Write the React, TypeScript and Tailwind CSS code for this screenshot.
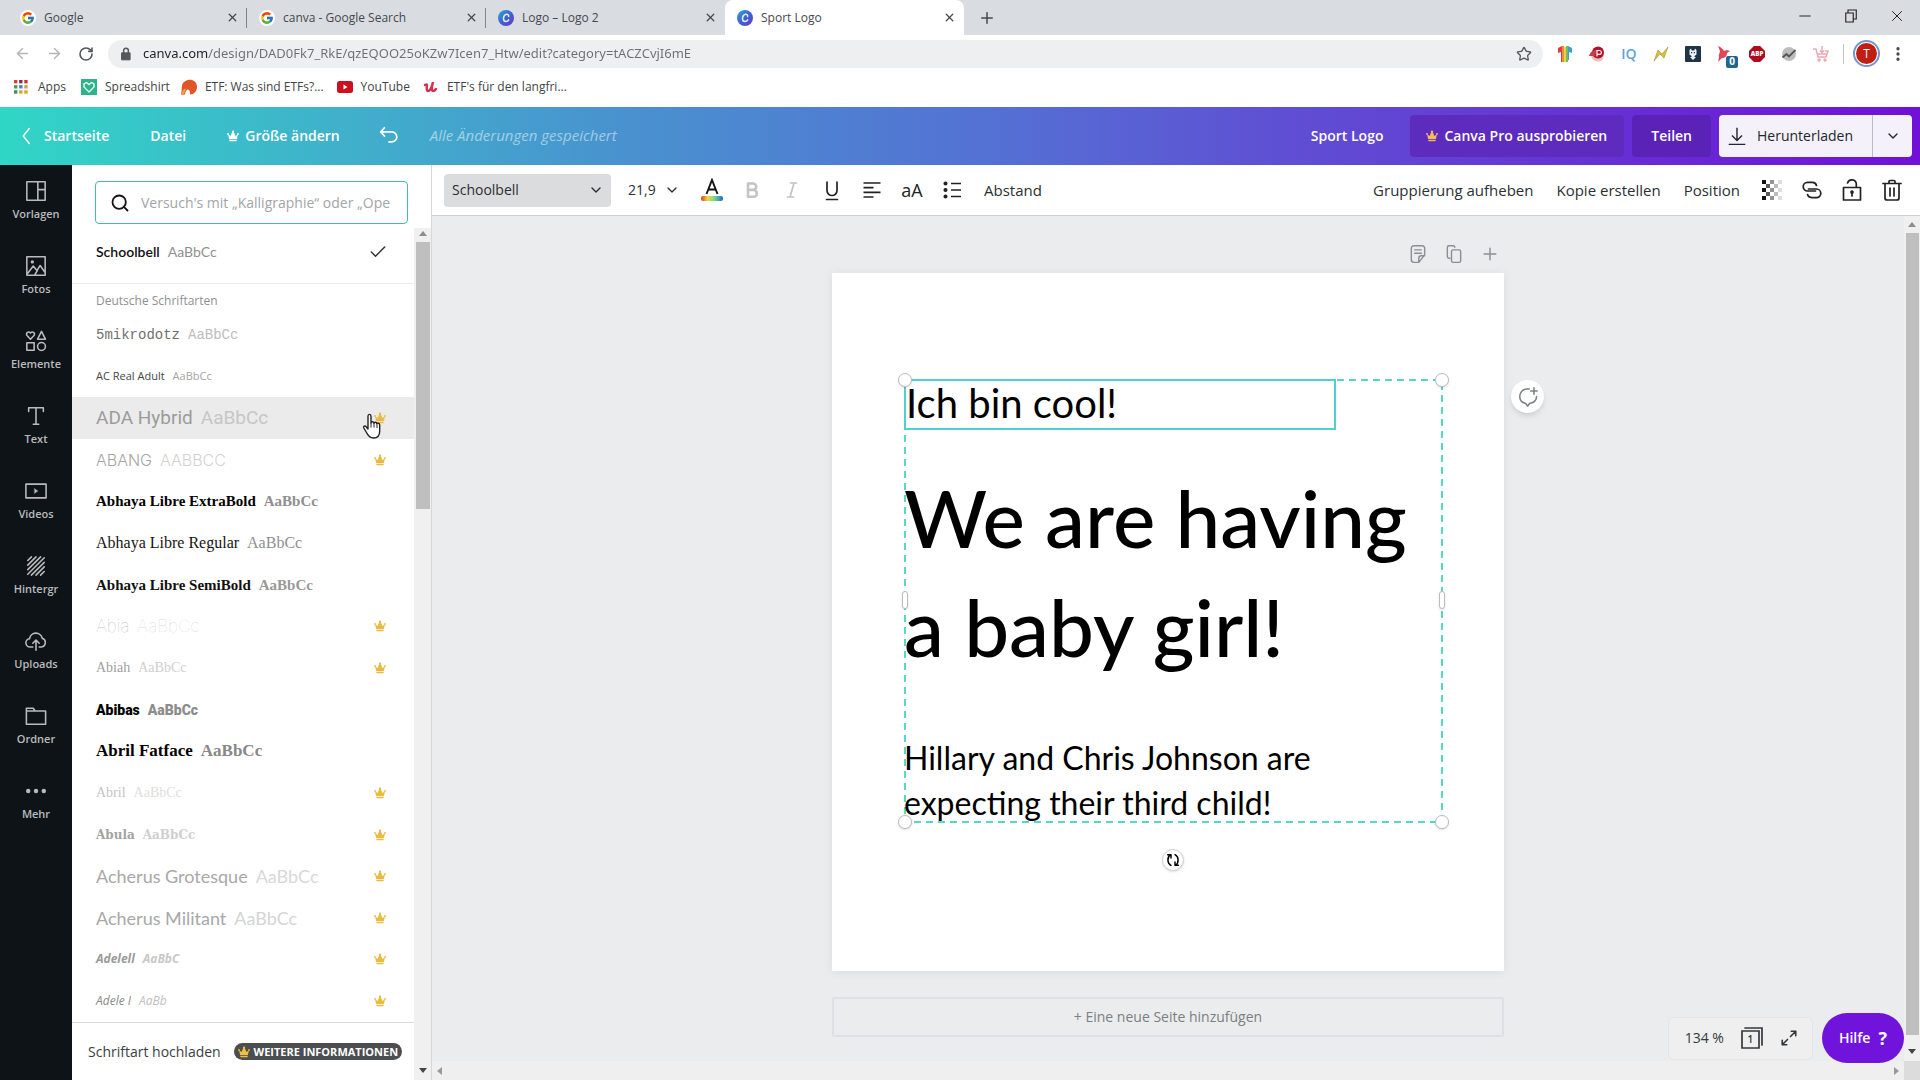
import React from "react";
import {
  Plus,
  Minus,
  X,
  ArrowLeft,
  ArrowRight,
  RotateCw,
  Lock,
  Star,
  EllipsisVertical,
  ChevronLeft,
  ChevronDown,
  Search,
  Check,
} from "lucide-react";
import { FcGoogle } from "react-icons/fc";

const SVG = ({ children, className = "size-6" }: { children: React.ReactNode; className?: string }) => (
  <svg
    viewBox="0 0 24 24"
    fill="none"
    stroke="currentColor"
    strokeWidth={1.7}
    strokeLinecap="round"
    strokeLinejoin="round"
    className={className + " shrink-0"}
    aria-hidden="true"
  >
    {children}
  </svg>
);

const Crown = ({ className }: { className: string }) => (
  <svg viewBox="0 0 12 12" fill="currentColor" className={className + " shrink-0"} aria-hidden="true">
    <path d="M2.2 9.300 1 4.300l2.600 1.700L5.200 2h1.600l1.600 4L11 4.300 9.800 9.300z" />
    <circle cx="1" cy="4" r=".9" />
    <circle cx="6" cy="1.600" r="1.100" />
    <circle cx="11" cy="4" r=".9" />
    <rect x="2.300" y="9.900" width="7.400" height="1.300" rx=".4" />
  </svg>
);

const CanvaMark = () => (
  <svg viewBox="0 0 16 16" className="size-4 shrink-0" aria-hidden="true">
    <defs>
      <linearGradient id="canvaMark" x1="0" y1="0" x2="1" y2="1">
        <stop offset="0" stopColor="#2fa8cf" />
        <stop offset=".5" stopColor="#3f63cf" />
        <stop offset="1" stopColor="#6a35d0" />
      </linearGradient>
    </defs>
    <circle cx="8" cy="8" r="8" fill="url(#canvaMark)" />
    <path
      d="M10.600 6.400C10.800 5 9.900 4.200 8.800 4.200 6.900 4.200 5.500 6.200 5.500 8.500c0 1.900 1 3.100 2.500 3.100 1.200 0 2.200-.7 2.700-1.700"
      fill="none"
      stroke="#dff3ff"
      strokeWidth="1.500"
      strokeLinecap="round"
    />
  </svg>
);

const TABS = [
  { title: "Google", kind: "g", active: false },
  { title: "canva - Google Search", kind: "g", active: false },
  { title: "Logo – Logo 2", kind: "c", active: false },
  { title: "Sport Logo", kind: "c", active: true },
];

function TabStrip() {
  return (
    <div className="flex h-[35px] items-stretch bg-[#d9dce1] pl-2 text-xs text-[#45494d]">
      {TABS.map((t, i) => (
        <div
          key={t.title}
          className={
            t.active
              ? "flex w-[239px] items-center gap-2 rounded-t-lg bg-white pr-2 pl-3"
              : "relative flex w-[239px] items-center gap-2 pr-2 pl-3"
          }
        >
          {t.kind === "g" ? (
            <span className="flex size-4 items-center justify-center rounded-full bg-white">
              <FcGoogle className="size-[14px]" />
            </span>
          ) : (
            <CanvaMark />
          )}
          <span className="flex-1 truncate">{t.title}</span>
          <button aria-label="Tab schließen">
            <X className="size-[13px]" strokeWidth={2.4} />
          </button>
          {i < 2 && <span className="absolute right-0 h-5 w-px bg-[#82868b]" />}
        </div>
      ))}
      <button aria-label="Neuer Tab" className="ml-[14px]">
        <Plus className="size-[18px]" strokeWidth={2} />
      </button>
      <div className="ml-auto flex items-center gap-7 pr-[14px] pb-1 text-[#222]">
        <button aria-label="Minimieren">
          <Minus className="size-[18px]" strokeWidth={1.3} />
        </button>
        <button aria-label="Wiederherstellen">
          <SVG className="size-[18px]">
            <path d="M5 8h10v12H5zM8 8V4h11v12h-4" strokeWidth="1.500" strokeLinejoin="miter" />
          </SVG>
        </button>
        <button aria-label="Schließen">
          <X className="size-[18px]" strokeWidth={1.3} />
        </button>
      </div>
    </div>
  );
}

function Extensions() {
  return (
    <div className="flex flex-1 items-center pl-[14px]">
      <div className="flex items-center gap-4">
        <svg viewBox="0 0 16 16" className="size-4">
          <path d="M1 2 5 0v16H4V6L1 7z" fill="#d8403a" />
          <path d="M5 0h2v16H5z" fill="#e8913a" />
          <path d="M7 1h2v15H7z" fill="#efd04a" />
          <path d="M9 0h2v16H9z" fill="#6dbf6a" />
          <path d="m11 0 4 2v5l-3-1v8h-1z" fill="#3fa0c8" />
        </svg>
        <svg viewBox="0 0 16 16" className="size-4">
          <path d="M2 9c0 6 9 9 12 4l1-5z" fill="#e5c4b8" />
          <circle cx="9" cy="6.500" r="6" fill="#b3122d" />
          <path d="M0 10c1-4 4-6 8-6l-2 6z" fill="#c93a4c" />
          <path d="M8 10.500V4.500h2.500a1.900 1.900 0 0 1 0 3.800H8" fill="none" stroke="#fff" strokeWidth="1.200" />
        </svg>
        <span className="flex w-4 justify-center text-sm font-semibold text-[#5aa5d6]">IQ</span>
        <svg viewBox="0 0 16 16" className="size-4">
          <path d="M15 1 11 12 7 8 1 15 5 4l4 4z" fill="#d9c22e" stroke="#8a8430" strokeWidth=".5" />
        </svg>
        <svg viewBox="0 0 16 16" className="size-4">
          <rect width="16" height="16" rx="1" fill="#1f3447" />
          <path d="M4.500 8.500V4L6 2.500l.7 2h2.600l.7-2L11.500 4v4.500L9.500 10v1H11l-3 3-3-3h1.500v-1z" fill="#eef4f8" />
          <path d="M6 6h1.200v1.200H6zM8.800 6H10v1.200H8.800z" fill="#1f3447" />
        </svg>
        <span className="relative">
          <svg viewBox="0 0 16 16" className="size-4">
            <path d="M1 0c3 1 5 3 6 5l3-1 3 1-3 2c0 3-2 5-5 5l-4 4 1-5C1 9 3 7 3 5z" fill="#e0475a" />
          </svg>
          <span className="absolute top-[10px] left-[9px] flex h-3 w-3 items-center justify-center rounded-xs bg-[#22658f] text-[10px] font-bold text-white">
            0
          </span>
        </span>
        <svg viewBox="0 0 18 18" className="size-4">
          <path d="M5.500 0h7L18 5.500v7L12.500 18h-7L0 12.500v-7z" fill="#b00b1c" />
          <text x="9" y="11.600" textAnchor="middle" fontSize="7" fontWeight="800" fill="#fff">
            ABP
          </text>
        </svg>
        <svg viewBox="0 0 16 16" className="size-4">
          <circle cx="8" cy="8" r="7" fill="#bdbdbd" />
          <path d="m1.500 11.500 4-3.500 2.500 2.500 6.500-6.500" fill="none" stroke="#555" strokeWidth="1.800" />
        </svg>
        <svg viewBox="0 0 16 16" className="size-4" fill="none" stroke="#eba6b3" strokeWidth="1.400">
          <path d="M0 3h3l2 8h8l2-6h-3M4.500 8h9M9 0v6M7 4.500 9 6.500l2-2" />
          <circle cx="6" cy="14" r="1" />
          <circle cx="12" cy="14" r="1" />
        </svg>
      </div>
      <div className="ml-[14px] flex items-center gap-[9px]">
        <span className="h-5 w-px bg-[#c4c6c9]" />
        <button aria-label="Profil" className="size-[27px] rounded-full border-2 border-[#7695cf] bg-white p-px">
          <span className="flex size-full items-center justify-center rounded-full bg-[#c11f14] text-xs text-white">T</span>
        </button>
        <button aria-label="Menü">
          <EllipsisVertical className="size-[18px] text-[#45494d]" strokeWidth={2.4} />
        </button>
      </div>
    </div>
  );
}

function BrowserBar() {
  return (
    <>
      <div className="flex h-[37px] items-center bg-white text-[#54585c]">
        <div className="flex w-[108px] items-center gap-[15px] pl-[14px]">
          <button aria-label="Zurück">
            <ArrowLeft className="size-[17px] text-[#b2b5b8]" />
          </button>
          <button aria-label="Vor">
            <ArrowRight className="size-[17px] text-[#b2b5b8]" />
          </button>
          <button aria-label="Neu laden">
            <RotateCw className="size-4" strokeWidth={2.4} />
          </button>
        </div>
        <div className="flex h-7 w-[1435px] items-center gap-[10px] rounded-full bg-[#eeeff1] px-[11px]">
          <SVG className="size-[14px]">
            <path d="M5 10h14v12H5z" fill="currentColor" />
            <path d="M8 10V6a4 4 0 0 1 8 0v4" strokeWidth="2.600" />
          </SVG>
          <input
            aria-label="Adresse"
            defaultValue="canva.com/design/DAD0Fk7_RkE/qzEQOO25oKZw7Icen7_Htw/edit?category=tACZCvjI6mE"
            className="flex-1 bg-linear-[90deg,#202124_65px,#6b6f73_66px] bg-clip-text font-['Noto_Sans',sans-serif] text-[13px] text-transparent outline-none"
          />
          <Star className="size-4" />
        </div>
        <Extensions />
      </div>
      <nav className="flex h-[35px] items-center bg-white pb-[5px] pl-[14px] text-xs text-[#3f4347]">
        <a href="#apps" className="flex items-center gap-[10px]">
          <svg viewBox="0 0 15 15" className="size-[14px]">
            {["#d0443a", "#8a3040", "#c8343a", "#4c9a5c", "#4a7fc0", "#c9a53a", "#3e8f56", "#c9a53a", "#d8a52e"].map((c, i) => (
              <rect key={i} x={(i % 3) * 5.5} y={Math.floor(i / 3) * 5.5} width="3.600" height="3.600" fill={c} />
            ))}
          </svg>
          Apps
        </a>
        <a href="#spreadshirt" className="ml-[15px] flex items-center gap-2">
          <svg viewBox="0 0 16 16" className="size-4">
            <rect width="16" height="16" fill="#30b38d" />
            <path d="M8 13 3 8V5l2.500-1.500L8 5.500l2.500-2L13 5v3z" fill="none" stroke="#e8fff8" strokeWidth="1.400" />
          </svg>
          Spreadshirt
        </a>
        <a href="#etf" className="ml-[11px] flex items-center gap-2">
          <svg viewBox="0 0 16 16" className="size-4">
            <path d="M1 7c1-8 15-9 15 1 0 4-3 7.500-7 7.500 0-4-1-5-2.500-5-2 1-2 3-2.500 5H0C1 12 .5 9 1 7z" fill="#e0552a" />
            <path d="M0 16c1-4 2-5.500 4-6.500l1 1C3.500 12 3.500 14 3 16z" fill="#efa04a" />
          </svg>
          ETF: Was sind ETFs?...
        </a>
        <a href="#youtube" className="ml-[13px] flex items-center gap-2">
          <svg viewBox="0 0 16 12" className="h-3 w-4">
            <rect width="16" height="12" rx="2.500" fill="#cc1020" />
            <path d="m6.500 3.500 4 2.500-4 2.500z" fill="#fff" />
          </svg>
          YouTube
        </a>
        <a href="#udemy" className="ml-[13px] flex items-center gap-2">
          <svg viewBox="0 0 16 16" className="size-4" fill="none" stroke="#d8304f" strokeWidth="2.400" strokeLinecap="round">
            <path d="M2 6c1 0 2-1 2 0s-1 6 1 6c3 0 4-5 5-9-1 4-2 9 0 9 1 0 2-.5 3-2" />
          </svg>
          ETF's für den langfri...
        </a>
      </nav>
    </>
  );
}

function Header() {
  return (
    <header className="flex h-[58px] items-center bg-linear-[90deg,#30d6c6_0%,#40b0cb_18%,#4991cf_33%,#5470d4_52%,#5f4fd3_67%,#6630d4_84%,#7010d8_100%] pr-2 text-sm font-semibold text-white">
      <a href="#start" className="flex items-center gap-2 pl-[18px]">
        <SVG className="size-[18px]">
          <path d="m15 2-8 10 8 10" strokeWidth="2" />
        </SVG>
        Startseite
      </a>
      <button className="ml-[41px]">Datei</button>
      <button className="ml-[41px] flex items-center gap-[6px]">
        <Crown className="size-3" />
        Größe ändern
      </button>
      <button aria-label="Rückgängig" className="ml-[38px]">
        <SVG className="size-[22px]">
          <path d="M7 3 3 7.500 7 12M3 7.500h12a5.500 5.500 0 0 1 0 11h-3" strokeWidth="1.900" />
        </SVG>
      </button>
      <span className="ml-[30px] text-[15px] font-normal text-white/50 italic">Alle Änderungen gespeichert</span>
      <span className="ml-auto">Sport Logo</span>
      <button className="ml-[27px] flex h-[42px] items-center gap-[6px] rounded bg-[#5d2bbd] pr-[17px] pl-4">
        <Crown className="size-3 text-[#f3bd55]" />
        Canva Pro ausprobieren
      </button>
      <button className="ml-2 h-[42px] rounded bg-[#5b22b8] px-[19px]">Teilen</button>
      <div className="ml-2 flex h-[42px] rounded bg-[#f4f1fb] font-medium text-[#23272c]">
        <button className="flex w-[154px] items-center gap-[10px] border-r border-[#bdb8cc] pl-2">
          <SVG className="size-5">
            <path d="M12 2v15M6 11.500l6 6 6-6M2 22h20" strokeLinecap="butt" />
          </SVG>
          Herunterladen
        </button>
        <button aria-label="Weitere Optionen" className="flex w-[39px] items-center justify-center">
          <ChevronDown className="size-4" />
        </button>
      </div>
    </header>
  );
}

const SIDE = [
  { label: "Vorlagen", icon: <path d="M2 2h20v20H2zM14 2v20M14 10.500h8" /> },
  {
    label: "Fotos",
    icon: (
      <>
        <path d="M2 2h20v20H2zM3 20l6-8 4 5 3.500-5.500 5 7M13.500 17l-2.500 4" />
        <circle cx="8" cy="7.500" r="1" />
      </>
    ),
  },
  {
    label: "Elemente",
    icon: (
      <>
        <path d="M6 10 2.200 6C.5 3.500 4 .5 6 3.300 8 .5 11.500 3.500 9.800 6zM18 1.500l4.300 8.500h-8.600zM2 14h8v8H2z" />
        <circle cx="18" cy="18" r="4.300" />
      </>
    ),
  },
  { label: "Text", icon: <path d="M4 7V3h16v4M12 3v18M9 21h6" /> },
  {
    label: "Videos",
    icon: (
      <>
        <path d="M1 4.500h22v15H1z" />
        <path d="m10.500 9.500 3.500 2.500-3.500 2.500z" fill="currentColor" strokeWidth=".5" />
      </>
    ),
  },
  { label: "Hintergr", icon: <path d="M3 6l4-4M3 11l9-9M3 16 17 2M3 21 21 3M7 22 21 8M12 22l9-9M17 22l4-4" /> },
  {
    label: "Uploads",
    icon: <path d="M8.500 18.500H6a4.500 4.500 0 0 1-1-9 7 7 0 0 1 13.800-.5A4.900 4.900 0 0 1 18 18.500h-2.500M12 22V11.500M8.500 14.500 12 11l3.500 3.500" />,
  },
  { label: "Ordner", icon: <path d="M1.500 21V3.500H9l2 3h11.500V21zM1.500 6.500H11" /> },
  {
    label: "Mehr",
    icon: (
      <g fill="currentColor" stroke="none">
        <circle cx="3.500" cy="12" r="2.400" />
        <circle cx="12" cy="12" r="2.400" />
        <circle cx="20.500" cy="12" r="2.400" />
      </g>
    ),
  },
];

function SideNav() {
  return (
    <nav className="flex w-[72px] shrink-0 flex-col bg-[#0e1318]">
      {SIDE.map((s) => (
        <button key={s.label} className="flex h-[75px] flex-col items-center gap-1 pt-[15px] text-[11px] leading-4 font-semibold text-[#b9bbbe]">
          <SVG className="size-[22px]">{s.icon}</SVG>
          {s.label}
        </button>
      ))}
    </nav>
  );
}

const FONTS: { name: string; sample: string; cls: string; nameColor: string; sampleColor: string; pro?: boolean; hover?: boolean }[] = [
  { name: "5mikrodotz", sample: "AaBbCc", cls: "font-['Liberation_Mono'] text-sm", nameColor: "text-[#6f6f6f]", sampleColor: "text-[#bdbdbd]" },
  { name: "AC Real Adult", sample: "AaBbCc", cls: "font-['Liberation_Sans_Narrow','Open_Sans'] text-[11px]", nameColor: "text-[#444]", sampleColor: "text-[#a5a5a5]" },
  { name: "ADA Hybrid", sample: "AaBbCc", cls: "font-['Roboto'] text-[19px]", nameColor: "text-[#9b9b9b]", sampleColor: "text-[#c6c6c6]", pro: true, hover: true },
  { name: "ABANG", sample: "AABBCC", cls: "font-['Inter'] text-base font-light", nameColor: "text-[#a5a5a5]", sampleColor: "text-[#d2d2d2]", pro: true },
  { name: "Abhaya Libre ExtraBold", sample: "AaBbCc", cls: "font-['Liberation_Serif'] text-[15px] font-bold", nameColor: "text-black", sampleColor: "text-[#8f8f8f]" },
  { name: "Abhaya Libre Regular", sample: "AaBbCc", cls: "font-['Liberation_Serif'] text-base", nameColor: "text-[#151515]", sampleColor: "text-[#8f8f8f]" },
  { name: "Abhaya Libre SemiBold", sample: "AaBbCc", cls: "font-['Liberation_Serif'] text-[15px] font-bold", nameColor: "text-[#111]", sampleColor: "text-[#999]" },
  { name: "Abia", sample: "AaBbCc", cls: "font-['Inter'] text-[17px] font-thin", nameColor: "text-[#c4c4c4]", sampleColor: "text-[#dcdcdc]", pro: true },
  { name: "Abiah", sample: "AaBbCc", cls: "font-['Liberation_Serif'] text-sm", nameColor: "text-[#a0a0a0]", sampleColor: "text-[#cfcfcf]", pro: true },
  { name: "Abibas", sample: "AaBbCc", cls: "font-['Roboto'] text-sm font-black", nameColor: "text-black", sampleColor: "text-[#8c8c8c]" },
  { name: "Abril Fatface", sample: "AaBbCc", cls: "font-['Liberation_Serif'] text-[17px] font-black", nameColor: "text-black", sampleColor: "text-[#888]" },
  { name: "Abril", sample: "AaBbCc", cls: "font-['Liberation_Serif'] text-sm", nameColor: "text-[#c4c4c4]", sampleColor: "text-[#e0e0e0]", pro: true },
  { name: "Abula", sample: "AaBbCc", cls: "font-['DejaVu_Serif'] text-xs font-bold", nameColor: "text-[#a3a3a3]", sampleColor: "text-[#cfcfcf]", pro: true },
  { name: "Acherus Grotesque", sample: "AaBbCc", cls: "font-['Lato'] text-lg", nameColor: "text-[#a8a8a8]", sampleColor: "text-[#d8d8d8]", pro: true },
  { name: "Acherus Militant", sample: "AaBbCc", cls: "font-['Lato'] text-lg", nameColor: "text-[#a8a8a8]", sampleColor: "text-[#d5d5d5]", pro: true },
  { name: "Adelell", sample: "AaBbC", cls: "font-['Liberation_Sans_Narrow','Open_Sans'] text-xs italic font-bold", nameColor: "text-[#9a9a9a]", sampleColor: "text-[#c8c8c8]", pro: true },
  { name: "Adele I", sample: "AaBb", cls: "font-['Liberation_Sans_Narrow','Open_Sans'] text-xs italic", nameColor: "text-[#8a8a8a]", sampleColor: "text-[#c0c0c0]", pro: true },
];

function HandCursor() {
  return (
    <svg viewBox="0 0 20 26" className="absolute top-4 right-[32px] h-[26px] w-5" aria-hidden="true">
      <path
        d="M6 16V3.200C6 .8 9 .8 9 3.200V10c0-1.800 3-1.600 3 .4 0-1.700 2.900-1.500 2.900.7 0-1.500 2.800-1.200 2.800.9v6c0 4-2 7-6.200 7-3.800 0-5.600-2.500-7-5.500L1.800 15c-.8-1.800 1.200-2.700 2.400-1.300z"
        fill="#fff"
        stroke="#222"
        strokeWidth="1.400"
        strokeLinejoin="round"
      />
      <path d="M9 10v4.500M12 10.500v4M15 11.500v3.500" stroke="#222" strokeWidth="1" />
    </svg>
  );
}

function FontPanel() {
  return (
    <aside className="flex w-[360px] shrink-0 flex-col border-r border-[#d5d7d9] bg-white">
      <div className="px-[23px] pt-4 pb-1">
        <div className="flex h-[43px] items-center gap-[11px] rounded border border-[#3fbfa8] px-[14px]">
          <Search className="size-5 shrink-0 text-[#151515]" strokeWidth={2.2} />
          <input
            aria-label="Schriftart suchen"
            className="w-full min-w-0 bg-transparent text-sm outline-none placeholder:text-[#a3a5a7]"
            placeholder="Versuch's mit „Kalligraphie“ oder „Ope"
          />
        </div>
      </div>
      <div className="flex min-h-0 flex-1">
        <div className="flex flex-1 flex-col">
          <button className="flex h-14 items-start justify-between border-b border-[#eceded] pt-[14px] pr-[26px] pl-6">
            <span className="flex items-center gap-2 font-['Lato'] text-sm leading-5">
              <span className="font-semibold text-[#111]">Schoolbell</span>
              <span className="text-[#8f8f8f]">AaBbCc</span>
            </span>
            <Check className="size-5 text-[#333]" strokeWidth={1.8} />
          </button>
          <h2 className="px-6 pt-2 pb-1 text-xs leading-[18px] text-[#8e9093]">Deutsche Schriftarten</h2>
          <ul className="flex flex-1 flex-col">
            {FONTS.map((f) => (
              <li key={f.name} className={f.hover ? "relative flex flex-1 bg-[#ebebeb]" : "flex flex-1"}>
                <button className="flex flex-1 items-center justify-between pr-[28px] pl-6">
                  <span className={"flex items-baseline gap-2 leading-5 whitespace-nowrap " + f.cls}>
                    <span className={f.nameColor}>{f.name}</span>
                    <span className={f.sampleColor}>{f.sample}</span>
                  </span>
                  {f.pro && <Crown className="size-3 text-[#eabb3f]" />}
                </button>
                {f.hover && <HandCursor />}
              </li>
            ))}
          </ul>
          <div className="flex h-[58px] items-center gap-[13px] border-t border-[#d9dadb] pr-3 pl-4">
            <button className="text-sm whitespace-nowrap text-[#3a3e42]">Schriftart hochladen</button>
            <button className="flex h-[17px] flex-1 items-center justify-center gap-1 rounded-full bg-[#4b4d4f] text-[11px] leading-4 font-bold whitespace-nowrap text-white">
              <Crown className="size-3 text-[#f0c040]" />
              WEITERE INFORMATIONEN
            </button>
          </div>
        </div>
        <div className="flex w-[17px] flex-col items-center bg-[#f0f0f0] py-[3px] text-[#8d8d8d]">
          <svg viewBox="0 0 8 5" className="mb-[6px] h-[5px] w-2 shrink-0">
            <path d="M4 0l4 5H0z" fill="currentColor" />
          </svg>
          <div className="h-[267px] w-[14px] bg-[#bfbfbf]" />
          <svg viewBox="0 0 8 5" className="mt-auto mb-1 h-[5px] w-2 text-[#444]">
            <path d="M4 5 8 0H0z" fill="currentColor" />
          </svg>
        </div>
      </div>
    </aside>
  );
}

function TextToolbar() {
  return (
    <div className="flex h-[51px] items-center border-b border-[#cfd1d4] bg-white pr-4 pl-3 text-[15px] text-[#2b2f33]">
      <label className="relative flex h-[33px] w-[167px] items-center rounded bg-[#dbdcde]">
        <select aria-label="Schriftart" className="h-full w-full appearance-none bg-transparent px-2 text-sm outline-none">
          <option>Schoolbell</option>
        </select>
        <ChevronDown className="pointer-events-none absolute right-[7px] size-4" />
      </label>
      <label className="relative ml-[17px] flex w-[52px] items-center">
        <select aria-label="Schriftgröße" className="w-full appearance-none bg-transparent text-sm outline-none">
          <option>21,9</option>
        </select>
        <ChevronDown className="pointer-events-none absolute right-0 size-4" />
      </label>
      <div className="ml-5 flex gap-4 text-[#222]">
        <button aria-label="Textfarbe">
          <svg viewBox="0 0 24 24" className="size-6">
            <defs>
              <linearGradient id="rainbow">
                <stop offset="0" stopColor="#d83a2e" />
                <stop offset=".3" stopColor="#f2d83a" />
                <stop offset=".6" stopColor="#6fe08a" />
                <stop offset="1" stopColor="#2a62d8" />
              </linearGradient>
            </defs>
            <path d="M6.500 16 12 2l5.500 14M8.500 11.500h7" fill="none" stroke="#111" strokeWidth="1.900" />
            <rect x="1" y="18" width="22" height="5" rx="2" fill="url(#rainbow)" />
          </svg>
        </button>
        <button aria-label="Fett" className="text-[#c2c4c6]">
          <SVG>
            <path d="M8 5.500h5a3.200 3.200 0 0 1 0 6.400H8zM8 12h5.500a3.400 3.400 0 0 1 0 6.800H8z" strokeWidth="2.600" />
          </SVG>
        </button>
        <button aria-label="Kursiv" className="text-[#c2c4c6]">
          <SVG>
            <path d="M10.500 5h6M7.500 19h6M14 5l-4 14" />
          </SVG>
        </button>
        <button aria-label="Unterstreichen">
          <SVG>
            <path d="M7 4v8.500a5 5 0 0 0 10 0V4M6.500 21.500h11" />
          </SVG>
        </button>
        <button aria-label="Ausrichtung">
          <SVG>
            <path d="M3.500 5h17M3.500 9.700h10M3.500 14.400h17M3.500 19h10" strokeLinecap="butt" />
          </SVG>
        </button>
        <button aria-label="Großbuchstaben" className="w-6 text-lg leading-6">
          aA
        </button>
        <button aria-label="Liste">
          <SVG>
            <path d="M11 5.500h10M11 12h10M11 18.500h10" strokeLinecap="butt" />
            <g fill="currentColor">
              <circle cx="5.500" cy="5.500" r="1.200" />
              <circle cx="5.500" cy="12" r="1.200" />
              <circle cx="5.500" cy="18.500" r="1.200" />
            </g>
          </SVG>
        </button>
      </div>
      <button className="ml-5">Abstand</button>
      <button className="ml-auto">Gruppierung aufheben</button>
      <button className="ml-[23px]">Kopie erstellen</button>
      <button className="ml-[23px]">Position</button>
      <div className="ml-5 flex gap-4 text-[#222]">
        <button aria-label="Transparenz">
          <svg viewBox="0 0 24 24" className="size-6">
            {[0, 1, 2, 3, 4].map((col) =>
              [0, 1, 2, 3, 4]
                .filter((r) => (r + col) % 2 === 0)
                .map((r) => (
                  <rect key={`${col}-${r}`} x={2 + col * 4} y={2 + r * 4} width="4" height="4" fill="#111" opacity={[1, 0.7, 0.45, 0.28, 0.14][col]} />
                ))
            )}
          </svg>
        </button>
        <button aria-label="Link">
          <SVG>
            <path d="M15.500 13H7.500a4.300 4.300 0 0 1 0-8.600h5a4.300 4.300 0 0 1 4 3M8.500 11h8a4.300 4.300 0 0 1 0 8.600h-5a4.300 4.300 0 0 1-4-3" />
          </SVG>
        </button>
        <button aria-label="Sperren">
          <SVG>
            <path d="M3.500 9.500h17V22h-17zM7.500 5a4.500 4.500 0 0 1 8.800 1v3.500M12 14.500V18" />
            <circle cx="12" cy="14" r="1" fill="currentColor" />
          </SVG>
        </button>
        <button aria-label="Löschen">
          <SVG>
            <path d="M3 5.500h18M5 5.500V20a2 2 0 0 0 2 2h10a2 2 0 0 0 2-2V5.500M9 5V3.500a1 1 0 0 1 1-1h4a1 1 0 0 1 1 1V5M10 10v8M14 10v8" />
          </SVG>
        </button>
      </div>
    </div>
  );
}

const HANDLE = "absolute size-[14px] rounded-full border border-[#b9bcc0] bg-white shadow-sm";
const PILL = "absolute top-[212px] h-[18px] w-[6px] rounded-full border border-[#b9bcc0] bg-white shadow-sm";

function Artboard() {
  return (
    <div className="relative h-[698px] w-full bg-white font-['Schoolbell','Comic_Sans_MS','Lato',sans-serif] text-black shadow-[0_1px_10px_rgba(0,0,0,0.07)]">
      <div className="absolute top-[106px] left-[72px] h-[444px] w-[539px]">
        <svg className="absolute inset-0 size-full" aria-hidden="true">
          <rect x="1" y="1" width="537" height="442" fill="none" stroke="#55d8c4" strokeWidth="2" strokeDasharray="7 5" />
        </svg>
        <p className="absolute top-0 left-0 h-[51px] w-[432px] border-2 border-[#4fd0cf] text-[40px] leading-[44px] whitespace-nowrap">
          Ich bin cool!
        </p>
        <p className="absolute top-[84px] left-0 text-[80px] leading-[109px] font-medium whitespace-nowrap">
          We are having
          <br />a baby girl!
        </p>
        <p className="absolute top-[356px] left-0 text-[32px] leading-[45px] whitespace-nowrap">
          Hillary and Chris Johnson are
          <br />
          expecting their third child!
        </p>
        <span className={HANDLE + " -top-[6px] -left-[6px]"} />
        <span className={HANDLE + " -top-[6px] -right-[6px]"} />
        <span className={HANDLE + " -bottom-[6px] -left-[6px]"} />
        <span className={HANDLE + " -right-[6px] -bottom-[6px]"} />
        <span className={PILL + " -left-[2px]"} />
        <span className={PILL + " -right-[2px]"} />
        <button
          aria-label="Drehen"
          className="absolute top-[470px] left-[258px] flex size-[22px] items-center justify-center rounded-full border border-[#cfd1d4] bg-white shadow-sm"
        >
          <SVG className="size-4">
            <path d="M9 20c-6-3-6-12-1-16M4 4h5v5M15 4c6 3 6 12 1 16M20 20h-5v-5" strokeWidth="2.200" />
          </SVG>
        </button>
      </div>
      <button
        aria-label="Kommentar hinzufügen"
        className="absolute top-[107px] left-[679px] flex size-[33px] items-center justify-center rounded-full bg-white text-[#7d8084] shadow-md"
      >
        <SVG className="size-[22px]">
          <path d="M13.500 3.200H11a8 8 0 0 0-8 8.300c0 4 2.600 6.700 6.500 7.500l2 3 2.200-3c4.800-.8 7.600-4 7.600-7.500M18.500 2v7M15 5.500h7" />
        </SVG>
      </button>
    </div>
  );
}

function Workspace() {
  return (
    <div className="relative flex min-h-0 flex-1">
      <div className="flex flex-1 flex-col bg-[#ebecee]">
        <div className="mx-auto flex w-[672px] flex-1 flex-col">
          <div className="flex h-[57px] items-end justify-end gap-4 pr-1 pb-[9px] text-[#8b8e92]">
            <button aria-label="Notizen">
              <SVG className="size-5">
                <path d="M20 13V5a3 3 0 0 0-3-3H7a3 3 0 0 0-3 3v14a3 3 0 0 0 3 3h6zM13 22v-5a3 3 0 0 1 3-3h4M8 7h8M8 11h8" />
              </SVG>
            </button>
            <button aria-label="Seite kopieren">
              <SVG className="size-5">
                <path d="M7 17H6a2 2 0 0 1-2-2V4a2 2 0 0 1 2-2h5a2 2 0 0 1 2 2M9 9a2 2 0 0 1 2-2h7a2 2 0 0 1 2 2v11a2 2 0 0 1-2 2h-7a2 2 0 0 1-2-2z" />
              </SVG>
            </button>
            <button aria-label="Seite hinzufügen">
              <SVG className="size-5">
                <path d="M12 5v14M5 12h14" />
              </SVG>
            </button>
          </div>
          <Artboard />
          <button className="mt-[26px] h-10 rounded-xs border-2 border-[#dfe0e3] text-sm text-[#7b7e82]">+ Eine neue Seite hinzufügen</button>
        </div>
        <div className="flex h-[19px] items-center justify-between bg-[#efefef] px-[5px] text-[#999]">
          <svg viewBox="0 0 5 8" className="h-2 w-[5px]">
            <path d="M0 4l5-4v8z" fill="currentColor" />
          </svg>
          <svg viewBox="0 0 5 8" className="h-2 w-[5px]">
            <path d="M5 4 0 0v8z" fill="currentColor" />
          </svg>
        </div>
      </div>
      <div className="flex w-4 flex-col bg-[#dcdcdc] text-[#8d8d8d]">
        <div className="flex flex-1 flex-col items-center bg-[#f0f0f0] pt-[6px] pb-[7px]">
          <svg viewBox="0 0 8 5" className="mb-[6px] h-[5px] w-2 shrink-0">
            <path d="M4 0l4 5H0z" fill="currentColor" />
          </svg>
          <div className="w-[13px] flex-1 bg-[#bfbfbf]" />
          <svg viewBox="0 0 8 5" className="mt-[14px] h-[5px] w-2 text-[#444]">
            <path d="M4 5 8 0H0z" fill="currentColor" />
          </svg>
        </div>
        <div className="h-[19px]" />
      </div>
      <div className="absolute right-4 bottom-[17px] flex items-center gap-[9px]">
        <div className="flex h-[43px] items-center gap-4 rounded-md border border-[#e4e5e7] bg-[#efeff0] pr-3 pl-4 text-sm text-[#34383c]">
          <span>134 %</span>
          <button aria-label="Seiten verwalten" className="relative size-6">
            <SVG>
              <path d="M2 5h17v17H2zM5 2h17v17" strokeLinejoin="miter" />
            </SVG>
            <span className="absolute top-[6px] left-0 w-[21px] text-center text-[10px] leading-[15px] font-semibold">1</span>
          </button>
          <button aria-label="Vollbild" className="pr-[2px]">
            <SVG className="size-[18px]">
              <path d="M14 10l7-7M15 3h6v6M10 14l-7 7M3 15v6h6" strokeWidth="2.200" />
            </SVG>
          </button>
        </div>
        <button className="flex h-[50px] items-center gap-2 rounded-full bg-[#7014dc] px-[17px] text-sm font-semibold text-white">
          Hilfe <span className="text-lg font-bold">?</span>
        </button>
      </div>
    </div>
  );
}

export default function App() {
  return (
    <div className="flex h-screen flex-col overflow-hidden bg-white font-['Open_Sans',sans-serif]">
      <TabStrip />
      <BrowserBar />
      <Header />
      <div className="flex min-h-0 flex-1">
        <SideNav />
        <FontPanel />
        <main className="flex min-w-0 flex-1 flex-col">
          <TextToolbar />
          <Workspace />
        </main>
      </div>
    </div>
  );
}
